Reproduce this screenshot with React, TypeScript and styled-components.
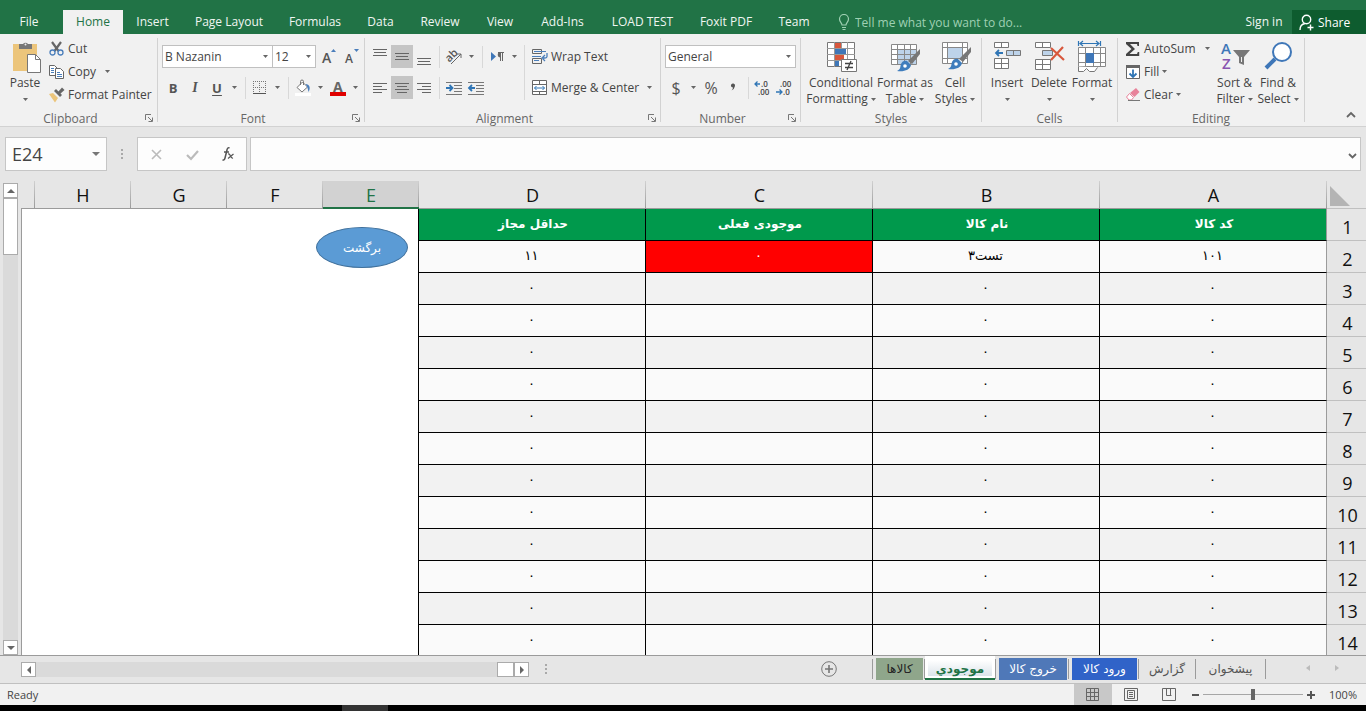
import React from "react";
import styled, { createGlobalStyle, css } from "styled-components";

const ui = `"Open Sans", "Noto Sans", sans-serif`;
const persian = `"DejaVu Sans", sans-serif`;

const GlobalStyle = createGlobalStyle`
  *, *::before, *::after { box-sizing: border-box; }
  body { margin: 0; background: #000; font-family: ${ui}; font-size: 12px; color: #444; }
  button, input, select { font: inherit; color: inherit; border: 0; padding: 0; margin: 0; background: none; border-radius: 0; }
  svg { flex: none; overflow: visible; }
`;

const Window = styled.div`
  display: flex;
  flex-direction: column;
  height: 100vh;
  overflow: hidden;
  background: #e6e6e6;
`;

/* ---------- ribbon tabs ---------- */

const TabBar = styled.nav`
  display: flex;
  flex: none;
  align-items: flex-end;
  height: 34px;
  background: #217346;
`;

const RibbonTab = styled.button<{ $w: number; $active?: boolean }>`
  flex: none;
  width: ${(p) => p.$w}px;
  height: 24px;
  line-height: 24px;
  text-align: center;
  white-space: nowrap;
  color: ${(p) => (p.$active ? "#217346" : "#f0f6f2")};
  background: ${(p) => (p.$active ? "#f1f1f1" : "transparent")};
`;

const FileTab = styled(RibbonTab)`
  margin-right: 5px;
`;

const TellMe = styled.label`
  display: flex;
  flex: 1;
  align-items: center;
  gap: 5px;
  height: 24px;
  padding-left: 15px;
  color: #9fd0b3;
`;

const TellMeInput = styled.input`
  width: 200px;
  outline: none;
  &::placeholder { color: #9fd0b3; opacity: 1; }
`;

const ShareButton = styled.button`
  display: flex;
  align-items: center;
  gap: 4px;
  width: 74px;
  height: 24px;
  padding-left: 7px;
  color: #fff;
  background: #0e5c2f;
`;

/* ---------- ribbon ---------- */

const Ribbon = styled.div`
  display: flex;
  flex: none;
  height: 93px;
  background: #f1f1f1;
  border-bottom: 1px solid #d2d2d2;
`;

const GroupBox = styled.section<{ $w: number }>`
  display: flex;
  flex: none;
  flex-direction: column;
  width: ${(p) => p.$w}px;
  padding-top: 3px;
  background: linear-gradient(#d2d2d2, #d2d2d2) right 4px / 1px 84px no-repeat;
`;

const GroupBody = styled.div`
  display: flex;
  height: 73px;
  padding: 0 4px;
`;

const GroupFoot = styled.div`
  display: flex;
  align-items: center;
  height: 16px;
  padding-right: 1px;
  color: #666;
`;

const GroupLabel = styled.span`
  flex: 1;
  text-align: center;
`;

const Launcher = styled.button`
  display: flex;
  justify-content: center;
  width: 16px;
`;

const BigButton = styled.button<{ $w: number }>`
  display: flex;
  flex: none;
  flex-direction: column;
  align-items: center;
  width: ${(p) => p.$w}px;
  padding-top: 4px;
  line-height: 16px;
  white-space: nowrap;
  & > svg:first-child { margin-bottom: 2px; }
`;

const BigLine = styled.span`
  display: flex;
  align-items: center;
  gap: 3px;
  height: 16px;
`;

const SmallColumn = styled.div<{ $w?: number }>`
  display: flex;
  flex-direction: column;
  width: ${(p) => (p.$w ? p.$w + "px" : "auto")};
`;

const SmallButton = styled.button<{ $spread?: boolean }>`
  display: flex;
  align-items: center;
  gap: 3px;
  height: 23px;
  padding-left: 3px;
  white-space: nowrap;
  & > svg:last-child:not(:first-child) { margin-left: ${(p) => (p.$spread ? "6px" : "0")}; }
`;

const ControlRows = styled.div`
  display: flex;
  flex-direction: column;
  gap: 8px;
  padding-top: 8px;
`;

const ControlRow = styled.div`
  display: flex;
  align-items: center;
  height: 23px;
`;

const Tool = styled.button<{ $w?: number; $on?: boolean }>`
  display: flex;
  flex: none;
  align-items: center;
  justify-content: center;
  width: ${(p) => p.$w ?? 22}px;
  height: 23px;
  font-size: 13px;
  color: #555;
  background: ${(p) => (p.$on ? "#c5c5c5" : "transparent")};
`;

const LetterTool = styled(Tool)<{ $kind: "bold" | "italic" | "underline" }>`
  font-weight: 700;
  ${(p) => p.$kind === "italic" && css`font-family: "Liberation Serif", serif; font-style: italic; font-size: 14px;`}
  ${(p) => p.$kind === "underline" && css`text-decoration: underline; text-underline-offset: 2px;`}
`;

const SymbolTool = styled(Tool)`
  font-size: 16px;
`;

const Divider = styled.i<{ $tall?: boolean }>`
  flex: none;
  width: 1px;
  height: ${(p) => (p.$tall ? 55 : 22)}px;
  margin: ${(p) => (p.$tall ? "8px 3px 0 3px" : "0 3px 0 4px")};
  background: #d8d8d8;
`;

const TextTool = styled.button`
  display: flex;
  align-items: center;
  gap: 3px;
  height: 23px;
  padding-left: 4px;
  white-space: nowrap;
  & > svg:last-child:not(:first-child) { margin-left: 5px; }
`;

const Combo = styled.span<{ $w: number }>`
  display: grid;
  width: ${(p) => p.$w}px;
  height: 23px;
  align-items: center;
  background: #fff;
  border: 1px solid #c0c0c0;
  & > * { grid-area: 1 / 1; }
  & > svg { justify-self: end; margin-right: 4px; pointer-events: none; }
  & + & { margin-left: -1px; }
`;

const ComboSelect = styled.select`
  width: 100%;
  height: 21px;
  padding-left: 2px;
  appearance: none;
  outline: none;
`;

const RibbonEnd = styled.div`
  display: flex;
  flex: 1;
  align-items: flex-end;
  justify-content: flex-end;
  padding: 0 10px 4px 0;
`;

/* ---------- formula bar ---------- */

const FormulaBar = styled.div`
  display: flex;
  flex: none;
  align-items: center;
  height: 54px;
  padding: 0 5px;
`;

const WhiteBox = styled.div<{ $w?: number }>`
  display: flex;
  flex: ${(p) => (p.$w ? "none" : "1")};
  align-items: center;
  width: ${(p) => (p.$w ? p.$w + "px" : "auto")};
  height: 34px;
  background: #fdfdfd;
  border: 1px solid #c6c6c6;
  & + & { margin-left: 3px; }
`;

const NameInput = styled.input`
  width: 80px;
  padding-left: 6px;
  font-size: 18px;
  outline: none;
`;

const FormulaInput = styled.input`
  flex: 1;
  height: 30px;
  padding-left: 6px;
  font-size: 18px;
  outline: none;
`;

const Grip = styled.i<{ $m: string }>`
  flex: none;
  width: 2px;
  height: 10px;
  margin: ${(p) => p.$m};
  background: repeating-linear-gradient(#a9a9a9 0 2px, transparent 2px 4px);
`;

const BarButton = styled.button`
  display: flex;
  flex: 1;
  justify-content: center;
  align-items: center;
`;

/* ---------- sheet ---------- */

const Work = styled.main`
  display: flex;
  flex: 1;
  min-height: 0;
  border-bottom: 1px solid #9b9b9b;
`;

const ScrollColumn = styled.div`
  display: flex;
  flex: none;
  flex-direction: column;
  width: 15px;
  margin: 2px 3px 0 3px;
  background: #dadada;
`;

const ScrollButton = styled.button`
  display: flex;
  flex: none;
  align-items: center;
  justify-content: center;
  width: 15px;
  height: 15px;
  background: #fff;
  border: 1px solid #ababab;
`;

const Thumb = styled.div<{ $w: number; $h: number }>`
  flex: none;
  width: ${(p) => p.$w}px;
  height: ${(p) => p.$h}px;
  background: #fff;
  border: 1px solid #ababab;
`;

const Track = styled.div`
  flex: 1;
`;

const SheetArea = styled.div`
  position: relative;
  flex: 1;
  min-width: 0;
  overflow: hidden;
`;

const Table = styled.table`
  width: 100%;
  table-layout: fixed;
  border-collapse: separate;
  border-spacing: 0;
`;

const Col = styled.col<{ $w?: number }>`
  width: ${(p) => (p.$w ? p.$w + "px" : "auto")};
`;

const ColumnHead = styled.th<{ $on?: boolean }>`
  height: 28px;
  padding: ${(p) => (p.$on ? "2px 0 0" : "1px 0 0")};
  font-size: 18px;
  font-weight: 400;
  line-height: 24px;
  color: ${(p) => (p.$on ? "#217346" : "#111")};
  background: linear-gradient(#d0d0d0, #9b9b9b) right / 1px 100% no-repeat ${(p) => (p.$on ? "#d2d2d2" : "#e6e6e6")};
  border-bottom: ${(p) => (p.$on ? "2px solid #217346" : "1px solid #9b9b9b")};
`;

const CornerHead = styled.th`
  padding: 2px 0 0 3px;
  border-bottom: 1px solid #c0c0c0;
  text-align: left;
  line-height: 0;
`;

const RowHead = styled.th`
  height: 32px;
  padding: 5px 0 0 2px;
  font-size: 18px;
  font-weight: 400;
  line-height: 24px;
  color: #111;
  background: #e6e6e6;
  border-bottom: 1px solid #c0c0c0;
`;

const Blank = styled.td<{ $first?: boolean; $last?: boolean }>`
  background: #fff;
  ${(p) => p.$first && css`border-left: 1px solid #9b9b9b;`}
  ${(p) => p.$last && css`border-right: 1px solid #000;`}
`;

const Cell = styled.td<{ $tone: "head" | "odd" | "even" | "alert"; $edge?: boolean }>`
  height: 32px;
  padding: ${(p) => (p.$tone === "head" ? "0 0 2px" : "0 3px 2px 0")};
  text-align: center;
  font-family: ${persian};
  font-size: ${(p) => (p.$tone === "head" ? 12 : 13)}px;
  line-height: 24px;
  font-weight: ${(p) => (p.$tone === "head" ? 700 : 400)};
  color: ${(p) => (p.$tone === "head" || p.$tone === "alert" ? "#fff" : "#000")};
  background: ${(p) => ({ head: "#00994c", odd: "#f2f2f2", even: "#fafafa", alert: "#ff0000" })[p.$tone]};
  border-bottom: 1px solid #000;
  border-right: 1px solid ${(p) => (p.$edge ? "#9b9b9b" : "#000")};
`;

const BackShape = styled.button`
  position: absolute;
  top: 46px;
  right: 958px;
  width: 92px;
  height: 41px;
  border: 1px solid #41719c;
  border-radius: 50%;
  background: #5b9bd5;
  color: #fff;
  font-family: ${persian};
  font-size: 12px;
`;

/* ---------- sheet tabs ---------- */

const SheetBar = styled.div`
  display: flex;
  flex: none;
  align-items: flex-start;
  height: 28px;
  padding-left: 21px;
  border-bottom: 1px solid #c0c0c0;
`;

const ScrollRow = styled.div`
  display: flex;
  flex: 1 1 509px;
  margin-top: 6px;
  background: #dadada;
`;

const AddSheet = styled.button`
  display: flex;
  flex: 1 1 325px;
  justify-content: flex-end;
  padding: 5px 35px 0 0;
`;

const SheetTabs = styled.div`
  display: flex;
  flex: none;
  align-items: flex-start;
  height: 24px;
  padding-right: 30px;
`;

const tabTone = {
  sage: css`color: #222; background: #8fa68b;`,
  steel: css`color: #fff; background: #4f78b8;`,
  blue: css`color: #fff; background: #3063c8;`,
  plain: css`color: #555;`,
  active: css`
    color: #217346;
    font-weight: 700;
    line-height: 26px;
    background: linear-gradient(#fff 20%, #dce4ea);
    border: solid #fff;
    border-width: 0 3px 2px;
    box-shadow: 0 2px 0 #217346;
  `,
};

const SheetTab = styled.button<{ $w: number; $tone: keyof typeof tabTone }>`
  width: ${(p) => p.$w}px;
  height: 22px;
  margin-top: ${(p) => (p.$tone === "active" ? 0 : 2)}px;
  font-family: ${persian};
  font-size: 12px;
  line-height: 20px;
  white-space: nowrap;
  ${(p) => tabTone[p.$tone]}
`;

const TabRule = styled.i<{ $l: number; $r: number }>`
  width: 1px;
  height: 20px;
  margin: 3px ${(p) => p.$r}px 0 ${(p) => p.$l}px;
  background: #9b9b9b;
`;

const SheetNav = styled.div`
  display: flex;
  gap: 21px;
  padding: 8px 25px 0 8px;
`;

/* ---------- status bar ---------- */

const StatusBar = styled.footer`
  display: flex;
  flex: none;
  align-items: center;
  height: 21px;
  padding: 0 9px 0 7px;
  background: #f1f1f1;
`;

const Ready = styled.span`
  flex: 1;
  font-size: 11px;
`;

const ViewButton = styled.button<{ $on?: boolean }>`
  display: flex;
  align-items: center;
  justify-content: center;
  width: 38px;
  height: 21px;
  background: ${(p) => (p.$on ? "#c8c8c8" : "transparent")};
`;

const ZoomStep = styled.button`
  display: flex;
  align-items: center;
  justify-content: center;
  width: 15px;
  height: 21px;
`;

const ZoomRange = styled.input`
  width: 100px;
  height: 20px;
  appearance: none;
  outline: none;
  &::-webkit-slider-runnable-track {
    height: 11px;
    background: linear-gradient(#a6a6a6, #a6a6a6) center / 100% 1px no-repeat;
  }
  &::-webkit-slider-thumb {
    appearance: none;
    width: 4px;
    height: 11px;
    background: #666;
  }
`;

const ZoomValue = styled.span`
  width: 39px;
  font-size: 11px;
  text-align: right;
`;

const Taskbar = styled.div`
  flex: none;
  height: 6px;
  padding-left: 342px;
  background: #000;
`;

const TaskbarItem = styled.div`
  width: 46px;
  height: 6px;
  background: #333;
`;

/* ---------- icons ---------- */

const Svg = ({ w = 16, h = 16, children }: { w?: number; h?: number; children: React.ReactNode }) => (
  <svg width={w} height={h} viewBox={`0 0 ${w} ${h}`} fill="none" aria-hidden="true">
    {children}
  </svg>
);

const Arrow = () => <Svg w={5} h={3}><path d="M0 0h5L2.500 3z" fill="#666" /></Svg>;

const LaunchIcon = () => (
  <Svg w={8} h={8}><path d="M.5 6V.5H6M3 3l4 4M7.500 3.500v4h-4" stroke="#777" /></Svg>
);

const PasteIcon = () => (
  <Svg w={32} h={32}>
    <path d="M4 3h24v27H4z" fill="#ecc57b" />
    <path d="M10 3h4a3 3 0 0 1 5 0h4v5H10z" fill="#777" />
    <circle cx="16.500" cy="3.500" r="1" fill="#f1f1f1" />
    <path d="M18.500 13.500h8l5 5v13h-13z" fill="#fff" stroke="#777" />
    <path d="M26.500 13.500v5h5" stroke="#777" />
  </Svg>
);
const CutIcon = () => (
  <Svg>
    <path d="M3 1l6.500 9M12 1L5.500 10" stroke="#666" strokeWidth="2.200" />
    <circle cx="3.500" cy="11.500" r="2.500" stroke="#4a7ebb" strokeWidth="1.300" />
    <circle cx="11.500" cy="11.500" r="2.500" stroke="#4a7ebb" strokeWidth="1.300" />
  </Svg>
);
const CopyIcon = () => (
  <Svg>
    <path d="M.5 1.500h5l3 3v7h-8z" fill="#fff" stroke="#666" />
    <path d="M6.500 4.500h5l3 3v7h-8z" fill="#fff" stroke="#666" />
    <path d="M2 4.500h3M2 6.500h3M2 8.500h3M8 8.500h3M8 10.500h5M8 12.500h5" stroke="#4a7ebb" />
  </Svg>
);
const PainterIcon = () => (
  <Svg>
    <path d="M0 7l4-1 5 5-3 4.500z" fill="#ecc57b" />
    <path d="M5 4l2-2 6 6-2 2z" fill="#666" />
    <path d="M9 5L13 .5l2.500 2.500L11 7z" fill="#666" />
    <path d="M4.500 5.500l5 5" stroke="#f1f1f1" />
  </Svg>
);
const LinesIcon = ({ rows }: { rows: [number, number, number][] }) => (
  <Svg w={14} h={16}>
    {rows.map(([x, y, w]) => <path key={y} d={`M${x} ${y + 0.5}h${w}`} stroke="#666" />)}
  </Svg>
);
const GrowIcon = ({ up }: { up?: boolean }) => (
  <Svg w={16} h={18}>
    <text x="1" y="15" fontSize={up ? 14 : 12} fontWeight="600" fill="#555">A</text>
    <path d={up ? "M10 4l2.500-3L15 4z" : "M10 1h5l-2.500 3z"} fill="#4a7ebb" />
  </Svg>
);
const BorderIcon = () => (
  <Svg w={14} h={14}>
    <path d="M.5 0v14M6.500 0v14M12.500 0v14M0 .5h14M0 6.500h14" stroke="#777" strokeDasharray="1 1" />
    <path d="M0 12.500h13" stroke="#555" />
  </Svg>
);
const FillColorIcon = () => (
  <Svg w={18} h={18}>
    <path d="M3 8.500L8.500 3l5 5L8 13z" fill="#fff" stroke="#777" />
    <path d="M6.500 6V2.500a1.500 1.500 0 0 1 3 0V6" stroke="#777" />
    <path d="M11.500 5c4 0 5.500 4 3 8-.5-3-1-5-3-8z" fill="#4a7ebb" />
    <path d="M1 14h16v3H1z" fill="#fff" />
  </Svg>
);
const FontColorIcon = () => (
  <Svg w={16} h={20}>
    <text x="3" y="14" fontSize="14" fontWeight="700" fill="#666">A</text>
    <path d="M0 14h16v4H0z" fill="#e00000" />
  </Svg>
);
const OrientIcon = () => (
  <Svg w={18} h={18}>
    <text x="1" y="11" fontSize="11" fontWeight="600" fill="#555" transform="rotate(-45 7 9)">ab</text>
    <path d="M6 16L16 6M12 6h4v4" stroke="#666" />
  </Svg>
);
const RtlIcon = () => (
  <Svg w={14} h={14}>
    <path d="M1 2l5 4.500L1 11z" fill="#3f77b8" />
    <path d="M8 2.500h6M10.500 2v9M12.500 2v9" stroke="#666" />
    <path d="M10.500 2v5.500a2.700 2.700 0 0 1 0-5.500z" fill="#666" />
  </Svg>
);
const IndentIcon = ({ right }: { right?: boolean }) => (
  <Svg w={16} h={14}>
    <path d="M0 1.500h16M8 4.500h8M8 7.500h8M8 10.500h8M0 13.500h16" stroke="#777" />
    <path d={right ? "M0 7h6M3.500 4l3 3-3 3" : "M1 7h6M4 4L1 7l3 3"} stroke="#2f75b5" strokeWidth="1.800" />
  </Svg>
);
const WrapIcon = () => (
  <Svg>
    <path d="M.5.5h9v4h-9zM.5 9.500h9v5h-9z" stroke="#666" />
    <path d="M2 2.500h12M0 7.500h9M2 11.500h5" stroke="#4a7ebb" />
    <path d="M15 4v3.500q0 1.500-2 1.500h-2M13 6l-3 3 3 3" stroke="#4a7ebb" strokeWidth="1.300" />
  </Svg>
);
const MergeIcon = () => (
  <Svg>
    <path d="M.5.5h14v14H.5zM.5 4.500h14M.5 11.500h14M7.500 1v3M7.500 12v3" fill="#fff" stroke="#666" />
    <path d="M2.500 8h10M4.500 6l-2 2 2 2M10.500 6l2 2-2 2" stroke="#2f75b5" />
  </Svg>
);
const DecimalIcon = ({ more }: { more?: boolean }) => (
  <Svg w={16} h={16}>
    <text x={more ? 6 : 3} y="7" fontSize="8" fontWeight="600" fill="#444">{more ? ".0" : ".00"}</text>
    <text x={more ? 3 : 6} y="15" fontSize="8" fontWeight="600" fill="#444">{more ? ".00" : ".0"}</text>
    <path d={more ? "M0 4h5M2.500 1.500L0 4l2.500 2.500" : "M-1 12h6M2.500 9.500L5 12l-2.500 2.500"} stroke="#2f75b5" strokeWidth="1.300" />
  </Svg>
);
const ConditionalIcon = () => (
  <Svg w={32} h={32}>
    <path d="M2.500 1.500h27v24h-27z" fill="#fff" stroke="#777" />
    <path d="M9.500 1v25M16.500 1v25M22.500 1v25M2 7.500h28M2 13.500h28M2 19.500h28" stroke="#999" />
    <path d="M10 2h6v5h-6zM10 14h9v5h-9z" fill="#d8573c" />
    <path d="M10 8h11v5H10zM10 20h4v5h-4z" fill="#3f77b8" />
    <path d="M16.500 18.500h15v12h-15z" fill="#fff" stroke="#777" />
    <path d="M20 22.500h8M20 26.500h8M26 20l-4 9" stroke="#444" strokeWidth="1.300" />
  </Svg>
);
const Brush = () => (
  <>
    <path d="M31 8v5l-8 10-4-3z" fill="#777" />
    <path d="M18 20l4 4c-1 5-7 7-14 6 4-2 3-4 4-7 1-3 4-4 6-3z" fill="#3f7dbd" />
    <circle cx="16" cy="25" r="1.800" fill="#fff" />
  </>
);
const FormatTableIcon = () => (
  <Svg w={32} h={32}>
    <path d="M2.500 3.500h25v20h-25z" fill="#fff" />
    <path d="M9 9h18v14H9z" fill="#bdd3ea" />
    <path d="M2.500 3.500h25v20h-25zM8.500 3v21M15.500 3v21M21.500 3v21M2 8.500h26M2 13.500h26M2 18.500h26" stroke="#888" />
    <Brush />
  </Svg>
);
const CellStyleIcon = () => (
  <Svg w={32} h={32}>
    <path d="M3.500 1.500h25v21h-25zM8.500 1v22M23.500 1v22M3 6.500h26M3 17.500h26" fill="#fff" stroke="#888" />
    <path d="M9 7h14v10H9z" fill="#bdd3ea" />
    <g transform="translate(1 -2)"><Brush /></g>
  </Svg>
);
const InsertIcon = () => (
  <Svg w={32} h={32}>
    <path d="M3.500 1.500h14v5h-14zM10.500 1v6M3.500 17.500h14v10h-14zM10.500 17v11M3 22.500h15" fill="#fff" stroke="#777" />
    <path d="M15.500 9.500h14v5h-14zM22.500 9v6" fill="#bdd3ea" stroke="#777" />
    <path d="M5 12h7M8 9l-3 3 3 3" stroke="#2f75b5" strokeWidth="1.800" />
  </Svg>
);
const DeleteIcon = () => (
  <Svg w={32} h={32}>
    <path d="M2.500 1.500h15v5h-15zM9.500 1v6M2.500 18.500h15v10h-15zM9.500 18v11M2 23.500h16" fill="#fff" stroke="#777" />
    <path d="M9.500 9.500h10v5h-10z" fill="#bdd3ea" stroke="#777" />
    <path d="M18 7l13 12M30 6L18 19" stroke="#d8573c" strokeWidth="2.200" />
  </Svg>
);
const FormatIcon = () => (
  <Svg w={32} h={32}>
    <path d="M2.500 0v5M24.500 0v5M4 2.500h19M7 0L4 2.500 7 5M20 0l3 2.500L20 5" stroke="#2f75b5" strokeWidth="1.200" />
    <path d="M2.500 6.500h27v19h-27zM9.500 6v20M17.500 6v20M24.500 6v20M2 12.500h28M2 21.500h28" fill="#fff" stroke="#888" />
    <path d="M10 12h8v10h-8z" fill="#3f77b8" />
    <path d="M2.500 25.500v5h5l3-3 3 3h5l3-4" fill="#fff" stroke="#777" />
  </Svg>
);
const SumIcon = () => (
  <Svg><path d="M1 1h13v4h-1.500L12 3H5l5 5-5.500 5H12l.8-2h1.400v4H1v-2l5.500-5L1 3z" fill="#444" /></Svg>
);
const FillDownIcon = () => (
  <Svg>
    <path d="M1.500 1.500h13v13h-13z" fill="#fff" stroke="#666" />
    <path d="M1 1h14v3H1z" fill="#666" />
    <path d="M8 5.500V13M4.500 9.500L8 13l3.500-3.500" stroke="#2f75b5" strokeWidth="1.800" />
  </Svg>
);
const ClearIcon = () => (
  <Svg>
    <path d="M5 6l6-5 3.500 4L9.500 10z" fill="#e8829a" />
    <path d="M4.500 6.500l4 4-2 2.500H4l-2.500-3z" fill="#fff" stroke="#e8829a" />
    <path d="M3 13.500h12" stroke="#777" />
  </Svg>
);
const SortIcon = () => (
  <Svg w={32} h={32}>
    <text x="2" y="13" fontSize="15" fontWeight="600" fill="#3f77b8">A</text>
    <text x="3" y="28" fontSize="15" fontWeight="600" fill="#8a55b0">Z</text>
    <path d="M14 9h17l-6 7v8l-5-2v-6z" fill="#777" />
    <path d="M22.500 16v5" stroke="#f1f1f1" />
  </Svg>
);
const FindIcon = () => (
  <Svg w={32} h={32}>
    <circle cx="20" cy="11" r="9" fill="#fff" stroke="#3f77b8" strokeWidth="2" />
    <path d="M13 18L4 27" stroke="#3f77b8" strokeWidth="4" />
  </Svg>
);
const Triangle = ({ d, color = "#666" }: { d: string; color?: string }) => (
  <Svg w={8} h={8}><path d={d} fill={color} /></Svg>
);

/* ---------- content ---------- */

const ribbonTabs: [string, number][] = [
  ["Home", 60], ["Insert", 59], ["Page Layout", 94], ["Formulas", 78], ["Data", 53], ["Review", 66],
  ["View", 54], ["Add-Ins", 71], ["LOAD TEST", 89], ["Foxit PDF", 78], ["Team", 58],
];

const headers = ["حداقل مجاز", "موجودی فعلی", "نام کالا", "کد کالا"];
const emptyRow = ["۰", "", "۰", "۰"];
const rows = [["۱۱", "۰", "تست۳", "۱۰۱"], ...Array.from({ length: 12 }, () => emptyRow)];

const Group = ({ name, width, launcher, children }: {
  name: string; width: number; launcher?: boolean; children: React.ReactNode;
}) => (
  <GroupBox $w={width}>
    <GroupBody>{children}</GroupBody>
    <GroupFoot>
      <GroupLabel>{name}</GroupLabel>
      {launcher && <Launcher aria-label={`${name} settings`}><LaunchIcon /></Launcher>}
    </GroupFoot>
  </GroupBox>
);

const Big = ({ width, icon, top, bottom }: {
  width: number; icon: React.ReactNode; top: string; bottom?: string;
}) => (
  <BigButton $w={width}>
    {icon}
    <BigLine>{top}</BigLine>
    <BigLine>{bottom}<Arrow /></BigLine>
  </BigButton>
);

const More = ({ label }: { label: string }) => <Tool $w={13} aria-label={label}><Arrow /></Tool>;

const ComboBox = ({ label, value, width }: { label: string; value: string; width: number }) => (
  <Combo $w={width}>
    <ComboSelect aria-label={label} defaultValue={value}><option>{value}</option></ComboSelect>
    <Arrow />
  </Combo>
);

const BlankCells = () => (
  <>
    <Blank $first /><Blank /><Blank /><Blank /><Blank $last />
  </>
);

export default function App() {
  return (
    <Window>
      <GlobalStyle />
      <TabBar>
        <FileTab $w={58}>File</FileTab>
        {ribbonTabs.map(([name, w]) => <RibbonTab key={name} $w={w} $active={name === "Home"}>{name}</RibbonTab>)}
        <TellMe>
          <Svg w={12} h={16}>
            <path d="M4 11c0-2-2.500-3-2.500-6a4.500 4.500 0 0 1 9 0c0 3-2.500 4-2.500 6zM4 13.500h4M4.500 15.500h3" stroke="#9fd0b3" strokeWidth="1.200" />
          </Svg>
          <TellMeInput aria-label="Tell me" placeholder="Tell me what you want to do..." />
        </TellMe>
        <RibbonTab $w={56}>Sign in</RibbonTab>
        <ShareButton>
          <Svg w={15} h={17}>
            <circle cx="7.500" cy="5.500" r="4.200" stroke="#fff" strokeWidth="1.400" />
            <path d="M1 16c0-4 2-6 5-6.500M8.500 13.500h6M11.500 10.500v6" stroke="#fff" strokeWidth="1.400" />
          </Svg>
          Share
        </ShareButton>
      </TabBar>

      <Ribbon>
        <Group name="Clipboard" width={158} launcher>
          <Big width={42} icon={<PasteIcon />} top="Paste" />
          <SmallColumn>
            <SmallButton><CutIcon />Cut</SmallButton>
            <SmallButton $spread><CopyIcon />Copy<Arrow /></SmallButton>
            <SmallButton><PainterIcon />Format Painter</SmallButton>
          </SmallColumn>
        </Group>

        <Group name="Font" width={207} launcher>
          <ControlRows>
            <ControlRow>
              <ComboBox label="Font name" value="B Nazanin" width={111} />
              <ComboBox label="Font size" value="12" width={44} />
              <Tool $w={26} aria-label="Increase font size"><GrowIcon up /></Tool>
              <Tool $w={20} aria-label="Decrease font size"><GrowIcon /></Tool>
            </ControlRow>
            <ControlRow>
              <LetterTool $kind="bold">B</LetterTool>
              <LetterTool $kind="italic">I</LetterTool>
              <LetterTool $kind="underline">U</LetterTool>
              <More label="Underline styles" />
              <Divider />
              <Tool aria-label="Borders"><BorderIcon /></Tool>
              <More label="Border styles" />
              <Divider />
              <Tool aria-label="Fill colour"><FillColorIcon /></Tool>
              <More label="Fill colours" />
              <Tool aria-label="Font colour"><FontColorIcon /></Tool>
              <More label="Font colours" />
            </ControlRow>
          </ControlRows>
        </Group>

        <Group name="Alignment" width={296} launcher>
          <ControlRows>
            <ControlRow>
              <Tool aria-label="Top align"><LinesIcon rows={[[0, 0, 14], [1, 3, 12], [0, 6, 14]]} /></Tool>
              <Tool $on aria-label="Middle align"><LinesIcon rows={[[0, 4, 14], [1, 7, 12], [0, 10, 14]]} /></Tool>
              <Tool aria-label="Bottom align"><LinesIcon rows={[[0, 9, 14], [1, 12, 12], [0, 15, 14]]} /></Tool>
              <Divider />
              <Tool aria-label="Orientation"><OrientIcon /></Tool>
              <More label="Orientation options" />
              <Divider />
              <Tool aria-label="Text direction"><RtlIcon /></Tool>
              <More label="Text direction options" />
            </ControlRow>
            <ControlRow>
              <Tool aria-label="Align left"><LinesIcon rows={[[0, 3, 14], [0, 6, 9], [0, 9, 14], [0, 12, 9]]} /></Tool>
              <Tool $on aria-label="Centre"><LinesIcon rows={[[0, 3, 14], [2, 6, 10], [0, 9, 14], [2, 12, 10]]} /></Tool>
              <Tool aria-label="Align right"><LinesIcon rows={[[0, 3, 14], [5, 6, 9], [0, 9, 14], [5, 12, 9]]} /></Tool>
              <Divider />
              <Tool aria-label="Increase indent"><IndentIcon right /></Tool>
              <Tool aria-label="Decrease indent"><IndentIcon /></Tool>
            </ControlRow>
          </ControlRows>
          <Divider $tall />
          <ControlRows>
            <TextTool><WrapIcon />Wrap Text</TextTool>
            <TextTool><MergeIcon />Merge &amp; Center<Arrow /></TextTool>
          </ControlRows>
        </Group>

        <Group name="Number" width={140} launcher>
          <ControlRows>
            <ComboBox label="Number format" value="General" width={131} />
            <ControlRow>
              <SymbolTool>$</SymbolTool>
              <More label="Currency options" />
              <SymbolTool>%</SymbolTool>
              <SymbolTool aria-label="Comma style">
                <Svg w={6} h={10}><path d="M1 2a2 2 0 1 1 4 1Q4.500 6 1.500 7.500 3 6 3 4.500A2 2 0 0 1 1 2z" fill="#555" /></Svg>
              </SymbolTool>
              <Divider />
              <Tool aria-label="Increase decimal"><DecimalIcon more /></Tool>
              <Tool aria-label="Decrease decimal"><DecimalIcon /></Tool>
            </ControlRow>
          </ControlRows>
        </Group>

        <Group name="Styles" width={181}>
          <Big width={72} icon={<ConditionalIcon />} top="Conditional" bottom="Formatting" />
          <Big width={56} icon={<FormatTableIcon />} top="Format as" bottom="Table" />
          <Big width={44} icon={<CellStyleIcon />} top="Cell" bottom="Styles" />
        </Group>

        <Group name="Cells" width={136}>
          <Big width={42} icon={<InsertIcon />} top="Insert" />
          <Big width={42} icon={<DeleteIcon />} top="Delete" />
          <Big width={44} icon={<FormatIcon />} top="Format" />
        </Group>

        <Group name="Editing" width={187}>
          <SmallColumn $w={91}>
            <SmallButton $spread><SumIcon />AutoSum<Arrow /></SmallButton>
            <SmallButton><FillDownIcon />Fill<Arrow /></SmallButton>
            <SmallButton><ClearIcon />Clear<Arrow /></SmallButton>
          </SmallColumn>
          <Big width={43} icon={<SortIcon />} top="Sort &amp;" bottom="Filter" />
          <Big width={44} icon={<FindIcon />} top="Find &amp;" bottom="Select" />
        </Group>

        <RibbonEnd>
          <button aria-label="Collapse the ribbon">
            <Svg w={10} h={7}><path d="M1 6l4-4 4 4" stroke="#666" strokeWidth="1.800" /></Svg>
          </button>
        </RibbonEnd>
      </Ribbon>

      <FormulaBar>
        <WhiteBox $w={102}>
          <NameInput aria-label="Name box" defaultValue="E24" />
          <BarButton aria-label="Named cells"><Svg w={8} h={4}><path d="M0 0h8L4 4z" fill="#777" /></Svg></BarButton>
        </WhiteBox>
        <Grip $m="0 14px" />
        <WhiteBox $w={110}>
          <BarButton aria-label="Cancel"><Svg w={11} h={11}><path d="M1 1l9 9M10 1l-9 9" stroke="#bbb" strokeWidth="1.600" /></Svg></BarButton>
          <BarButton aria-label="Enter"><Svg w={13} h={11}><path d="M1 6l4 4 7-8" stroke="#bbb" strokeWidth="2.200" /></Svg></BarButton>
          <BarButton aria-label="Insert function">
            <Svg w={14} h={16}>
              <path d="M8.500 2Q6.500 1 6 4L4 12q-.5 2.500-2.500 2M3 6h5" stroke="#555" strokeWidth="1.500" />
              <path d="M7 8q1.500-.5 2.500 2t2.500 2M12.500 8L7 12.500" stroke="#555" strokeWidth="1.200" />
            </Svg>
          </BarButton>
        </WhiteBox>
        <WhiteBox>
          <FormulaInput aria-label="Formula" />
          <button aria-label="Expand formula bar"><Svg w={13} h={6}><path d="M2 1l3.500 3.500L9 1" stroke="#666" strokeWidth="1.800" /></Svg></button>
        </WhiteBox>
      </FormulaBar>

      <Work>
        <ScrollColumn>
          <ScrollButton aria-label="Scroll up"><Triangle d="M0 6h8L4 2z" /></ScrollButton>
          <Thumb $w={15} $h={57} />
          <Track />
          <ScrollButton aria-label="Scroll down"><Triangle d="M0 2h8L4 6z" /></ScrollButton>
        </ScrollColumn>
        <SheetArea>
          <Table>
            <colgroup>
              <Col />
              {[96, 96, 96, 96, 227, 227, 227, 227, 39].map((w, i) => <Col key={i} $w={w} />)}
            </colgroup>
            <thead>
              <tr>
                <ColumnHead />
                {"HGFEDCBA".split("").map((c) => <ColumnHead key={c} $on={c === "E"}>{c}</ColumnHead>)}
                <CornerHead><Svg w={20} h={20}><path d="M0 0v20h20z" fill="#b4b4b4" /></Svg></CornerHead>
              </tr>
            </thead>
            <tbody>
              <tr>
                <BlankCells />
                {headers.map((h, i) => <Cell key={h} dir="rtl" $tone="head" $edge={i === 3}>{h}</Cell>)}
                <RowHead>1</RowHead>
              </tr>
              {rows.map((row, r) => (
                <tr key={r}>
                  <BlankCells />
                  {row.map((v, i) => (
                    <Cell key={i} dir="rtl" $edge={i === 3} $tone={r === 0 && i === 1 ? "alert" : r % 2 ? "odd" : "even"}>{v}</Cell>
                  ))}
                  <RowHead>{r + 2}</RowHead>
                </tr>
              ))}
            </tbody>
          </Table>
          <BackShape>برگشت</BackShape>
        </SheetArea>
      </Work>

      <SheetBar>
        <ScrollRow>
          <ScrollButton aria-label="Scroll left"><Triangle d="M6 0v8L2 4z" /></ScrollButton>
          <Track />
          <Thumb $w={17} $h={15} />
          <ScrollButton aria-label="Scroll right"><Triangle d="M2 0v8l4-4z" /></ScrollButton>
        </ScrollRow>
        <Grip $m="8px 0 0 16px" />
        <AddSheet aria-label="New sheet">
          <Svg><circle cx="8" cy="8" r="7.300" stroke="#777" /><path d="M8 4v8M4 8h8" stroke="#777" strokeWidth="1.600" /></Svg>
        </AddSheet>
        <SheetTabs>
          <TabRule $l={0} $r={3} />
          <SheetTab $w={47} $tone="sage">کالاها</SheetTab>
          <TabRule $l={1} $r={0} />
          <SheetTab $w={70} $tone="active">موجودي</SheetTab>
          <TabRule $l={0} $r={3} />
          <SheetTab $w={68} $tone="steel">خروج کالا</SheetTab>
          <TabRule $l={1} $r={3} />
          <SheetTab $w={65} $tone="blue">ورود کالا</SheetTab>
          <TabRule $l={1} $r={0} />
          <SheetTab $w={56} $tone="plain">گزارش</SheetTab>
          <TabRule $l={0} $r={0} />
          <SheetTab $w={69} $tone="plain">پیشخوان</SheetTab>
          <TabRule $l={0} $r={0} />
        </SheetTabs>
        <SheetNav>
          <Triangle d="M6 1v6L2 4z" color="#bbb" />
          <Triangle d="M2 1v6l4-3z" color="#bbb" />
        </SheetNav>
      </SheetBar>

      <StatusBar>
        <Ready>Ready</Ready>
        <ViewButton $on aria-label="Normal view">
          <Svg w={14} h={14}><path d="M.5.5h12v12H.5zM4.500 0v13M8.500 0v13M0 4.500h13M0 8.500h13" stroke="#666" /></Svg>
        </ViewButton>
        <ViewButton aria-label="Page layout view">
          <Svg w={14} h={14}><path d="M.5.5h13v12H.5zM3.500 2.500h7v8h-7zM5 4.500h4M5 6.500h4M5 8.500h4" stroke="#666" /></Svg>
        </ViewButton>
        <ViewButton aria-label="Page break preview">
          <Svg w={14} h={14}><path d="M.5.5h13v12H.5zM4.500 0v7.500M8.500 0v7.500M4.500 7.500h5" stroke="#666" /></Svg>
        </ViewButton>
        <ZoomStep aria-label="Zoom out"><Svg w={7} h={8}><path d="M0 4h7" stroke="#555" strokeWidth="2" /></Svg></ZoomStep>
        <ZoomRange type="range" min={10} max={190} defaultValue={100} aria-label="Zoom" />
        <ZoomStep aria-label="Zoom in"><Svg w={8} h={8}><path d="M0 4h8M4 0v8" stroke="#555" strokeWidth="2" /></Svg></ZoomStep>
        <ZoomValue>100%</ZoomValue>
      </StatusBar>
      <Taskbar><TaskbarItem /></Taskbar>
    </Window>
  );
}
